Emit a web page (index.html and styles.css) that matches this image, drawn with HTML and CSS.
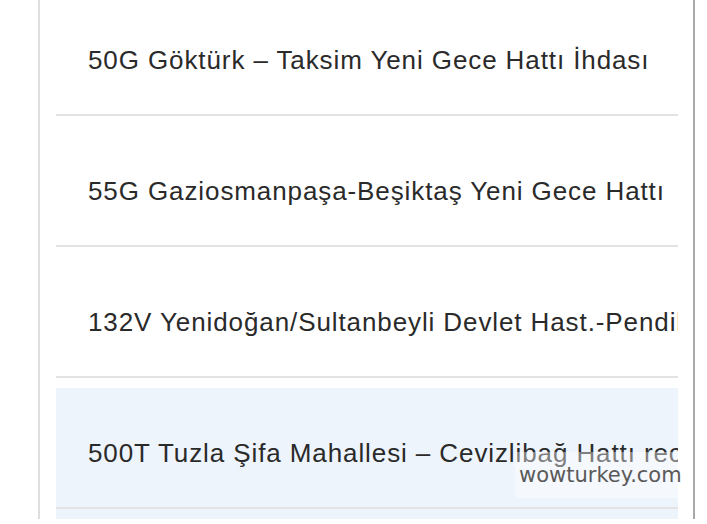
FILE: index.html
```html
<!DOCTYPE html>
<html lang="tr">
<head>
<meta charset="utf-8">
<link rel="stylesheet" href="styles.css">
</head>
<body>
<div class="page">
  <ul class="list">
    <li class="item"><div class="item-inner">50G Göktürk – Taksim Yeni Gece Hattı İhdası</div></li>
    <li class="item"><div class="item-inner">55G Gaziosmanpaşa-Beşiktaş Yeni Gece Hattı</div></li>
    <li class="item"><div class="item-inner">132V Yenidoğan/Sultanbeyli Devlet Hast.-Pendik Hattı</div></li>
    <li class="item item-active"><div class="item-inner">500T Tuzla Şifa Mahallesi – Cevizlibağ Hattı rec</div></li>
  </ul>
  <div class="watermark">wowturkey.com</div>
</div>
</body>
</html>
```
FILE: styles.css
```css
html, body {
  margin: 0;
  padding: 0;
  background: #fff;
  height: 100%;
  overflow: hidden;
}
.page {
  position: relative;
  margin-left: 38px;
  width: 622px;
  height: 100%;
  padding: 0 15px 0 16px;
  border-left: 2px solid #dedede;
  border-right: 2px solid #a9a9a9;
}
.list {
  list-style: none;
  margin: -5px 0 0 0;
  padding: 0;
}
.item {
  padding-bottom: 10px;
  overflow: hidden;
}
.item-active {
  background: #eef4fc;
}
.item-inner {
  padding: 50px 0 39px 32px;
  line-height: 30px;
  font-family: "Liberation Sans", Arial, sans-serif;
  font-size: 26px;
  letter-spacing: 0.9px;
  color: #2a2a2a;
  white-space: nowrap;
  border-bottom: 2px solid #e3e3e3;
}
.watermark {
  position: absolute;
  left: 475px;
  top: 457px;
  width: 168px;
  height: 43px;
  padding: 3px 0 0 4px;
  background: rgba(255, 255, 255, 0.4);
  font-family: "DejaVu Sans", Verdana, sans-serif;
  font-size: 21px;
  line-height: 40px;
  color: #5a5a5a;
  white-space: nowrap;
}
```
